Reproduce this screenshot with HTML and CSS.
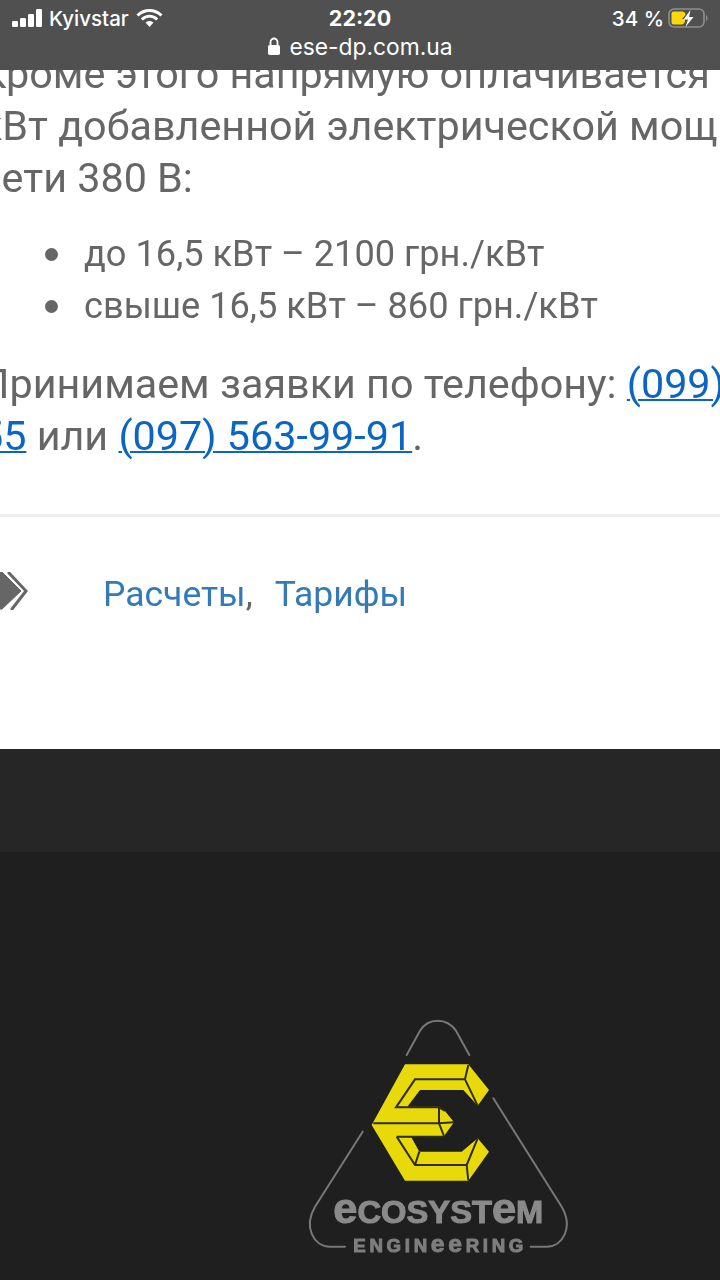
FILE: index.html
```html
<!DOCTYPE html>
<html lang="ru">
<head>
<meta charset="utf-8">
<title>ese-dp.com.ua</title>
<link rel="stylesheet" href="styles.css">
</head>
<body>
<header class="status">
  <div class="status-row">
    <div class="status-left">
      <svg class="signal" width="31" height="18" viewBox="0 0 31 18"><rect x="0" y="12" width="6" height="6" rx="1.2"/><rect x="8" y="9" width="6" height="9" rx="1.2"/><rect x="16" y="5" width="6" height="13" rx="1.2"/><rect x="24" y="0" width="6" height="18" rx="1.2"/></svg>
      <span class="carrier">Kyivstar</span>
      <svg class="wifi" width="27" height="20" viewBox="0 0 27 20"><path d="M1.5 7.5C8.5 .8 18.5 .8 25.5 7.5M5.8 11.5C10.5 7.2 16.5 7.2 21.2 11.5" fill="none" stroke="#fff" stroke-width="3"/><path d="M9.5 14.6c2.5-2.2 5.5-2.2 8 0l-4 4.4z" fill="#fff"/></svg>
    </div>
    <div class="clock">22:20</div>
    <div class="status-right">
      <span class="pct">34 %</span>
      <svg class="battery" width="42" height="22" viewBox="0 0 42 22"><rect x="1" y="2" width="35" height="18" rx="5" fill="none" stroke="#8f8f8f" stroke-width="1.6"/><path d="M38 8c2 .5 2 5.500 0 6z" fill="#8f8f8f"/><path d="M3.500 6.500a2 2 0 0 1 2-2H14c2.500 0 3.500 1.500 3.500 3.500l-3.500 4h3v1.500c0 2-1.500 4-3.500 4H5.500a2 2 0 0 1-2-2z" fill="#ffd60a"/><path d="M22.500 3 15.500 12.500h4.500L17.500 20l8-10h-4.500z" fill="#fff"/></svg>
    </div>
  </div>
  <div class="url-row">
    <svg class="lock" width="14" height="19" viewBox="0 0 14 19"><path d="M3.500 8V5a3.500 3.500 0 0 1 7 0v3" fill="none" stroke="#fff" stroke-width="1.800"/><rect x="1" y="8" width="12" height="10" rx="1.800" fill="#fff"/></svg>
    <span>ese-dp.com.ua</span>
  </div>
</header>

<main class="article">
  <div class="prose">
    <p class="para">Кроме этого напрямую оплачивается<br>кВт добавленной электрической мощности<br>сети 380 В:</p>
    <ul class="list">
      <li class="item">до 16,5 кВт – 2100 грн./кВт</li>
      <li class="item">свыше 16,5 кВт – 860 грн./кВт</li>
    </ul>
    <p class="para">Принимаем заявки по телефону: <a class="tel" href="#">(099) 000-00-</a><br><a class="tel" href="#">55</a> или <a class="tel" href="#">(097) 563-99-91</a>.</p>
  </div>
  <div class="tags">
    <svg class="tag-icon" width="28" height="38" viewBox="0 0 28 38"><path d="M-12 0H2L21 19 2 37H-12z" fill="#666" stroke="#666" stroke-linejoin="round"/><path d="M9 1 26 19 12 37" fill="none" stroke="#666" stroke-width="3" stroke-linecap="round" stroke-linejoin="miter"/></svg>
    <a class="cat" href="#">Расчеты</a><span class="comma">,</span>
    <a class="cat" href="#">Тарифы</a>
  </div>
</main>

<div class="footer-top"></div>
<footer class="footer">
  <svg class="logo" width="300" height="270" viewBox="0 0 900 810">
    <g fill="none" stroke="#777" stroke-width="6" stroke-linecap="round">
      <path d="M350 135 390 62C415 22 470 22 498 62L538 135"/>
      <path d="M610 265 815 590C850 650 820 710 770 710H722"/>
      <path d="M218 365 75 590C40 650 70 710 120 710H165"/>
    </g>
    <path class="logo-e" d="M345 163H535L597 240 563 287 520 240H390L352 290H447L465 303 492 337 462 378H362L388 425H515L563 385 597 425 535 512H345L245 345z"/>
    <path class="logo-edge" d="M535 165 525 208H375L318 292H447V340H250M525 208 563 287M447 340 492 337M447 340 462 378M320 380H462M320 380 375 465H530L535 512M530 465 563 385M375 465 388 425M447 292 465 303"/>
    <text class="logo-main" x="445" y="640" text-anchor="middle" textLength="630" lengthAdjust="spacingAndGlyphs"><tspan class="logo-e-big">e</tspan>COSYST<tspan class="logo-e-big">e</tspan>M</text>
    <text class="logo-sub" x="445" y="725" text-anchor="middle" textLength="510" lengthAdjust="spacing">ENGIN<tspan class="logo-sub-e">ee</tspan>RING</text>
  </svg>
</footer>
</body>
</html>
```
FILE: styles.css
```css
* { box-sizing: border-box; }
html, body { margin: 0; padding: 0; }
body {
  width: 720px;
  height: 1280px;
  overflow: hidden;
  position: relative;
  background: #fff;
  font-family: Roboto, "Noto Sans", sans-serif;
  color: #666;
}
.status {
  position: absolute;
  top: 0;
  left: 0;
  width: 720px;
  height: 70px;
  background: #505050;
  color: #fff;
  z-index: 2;
  font-family: Inter, "Liberation Sans", Arial, sans-serif;
}
.status-row {
  height: 36px;
  position: relative;
  display: flex;
  justify-content: space-between;
  align-items: center;
  padding: 0 10px 0 12px;
}
.status-left { display: flex; align-items: center; gap: 6px; }
.signal { fill: #fff; }
.carrier { font-size: 20.500px; font-weight: 500; }
.wifi { margin-left: 1px; }
.clock {
  position: absolute;
  left: 0;
  right: 0;
  text-align: center;
  font-size: 21.500px;
  font-weight: 700;
}
.status-right { display: flex; align-items: center; gap: 4px; }
.pct { font-size: 20.500px; font-weight: 500; }
.url-row {
  display: flex;
  justify-content: center;
  align-items: center;
  gap: 8px;
  font-size: 22.800px;
  height: 21px;
}
.article {
  height: 749px;
  padding-top: 48px;
  background: #fff;
  overflow: hidden;
  filter: blur(0.4px);
}
.prose {
  margin-left: -20px;
  font-size: 41.300px;
  line-height: 52px;
  white-space: nowrap;
}
.para { margin: 0; }
.list {
  margin: 24px 0 26px;
  padding: 0 0 0 65px;
  list-style: none;
  font-size: 36.200px;
}
.item {
  display: flex;
  align-items: center;
  gap: 26px;
}
.item::before {
  content: "";
  width: 13px;
  height: 13px;
  border-radius: 50%;
  background: #666;
}
.tel { color: #0b65c2; text-decoration: underline; text-decoration-thickness: 2px; }
.tags {
  margin-top: 52px;
  border-top: 3px solid #eee;
  padding-top: 55px;
  display: flex;
  align-items: center;
  font-size: 35.500px;
  line-height: 44px;
}
.tag-icon { flex: none; margin: 0 75px 6px 0; }
.cat { color: #337ab7; text-decoration: none; }
.comma { margin-right: 22px; }
.footer-top { height: 103px; background: #262626; }
.footer {
  height: 428px;
  background: #1f1f1f;
  position: relative;
  overflow: hidden;
  display: flex;
  justify-content: flex-end;
  padding: 158px 130px 0 0;
}
.logo { flex: none; filter: blur(0.6px); }
.logo-e { fill: #e8da0a; }
.logo-edge { fill: none; stroke: #2f2d0c; stroke-width: 6; }
.logo-main {
  font-family: "Liberation Sans", Arial, sans-serif;
  font-weight: 700;
  font-size: 94px;
  fill: #8a8a8a;
  stroke: #8a8a8a;
  stroke-width: 3;
}
.logo-e-big { font-size: 125px; }
.logo-sub {
  font-family: "Liberation Sans", Arial, sans-serif;
  font-weight: 700;
  font-size: 56px;
  fill: #7e7e7e;
  stroke: #7e7e7e;
  stroke-width: 3;
}
.logo-sub-e { font-size: 74px; }
```
